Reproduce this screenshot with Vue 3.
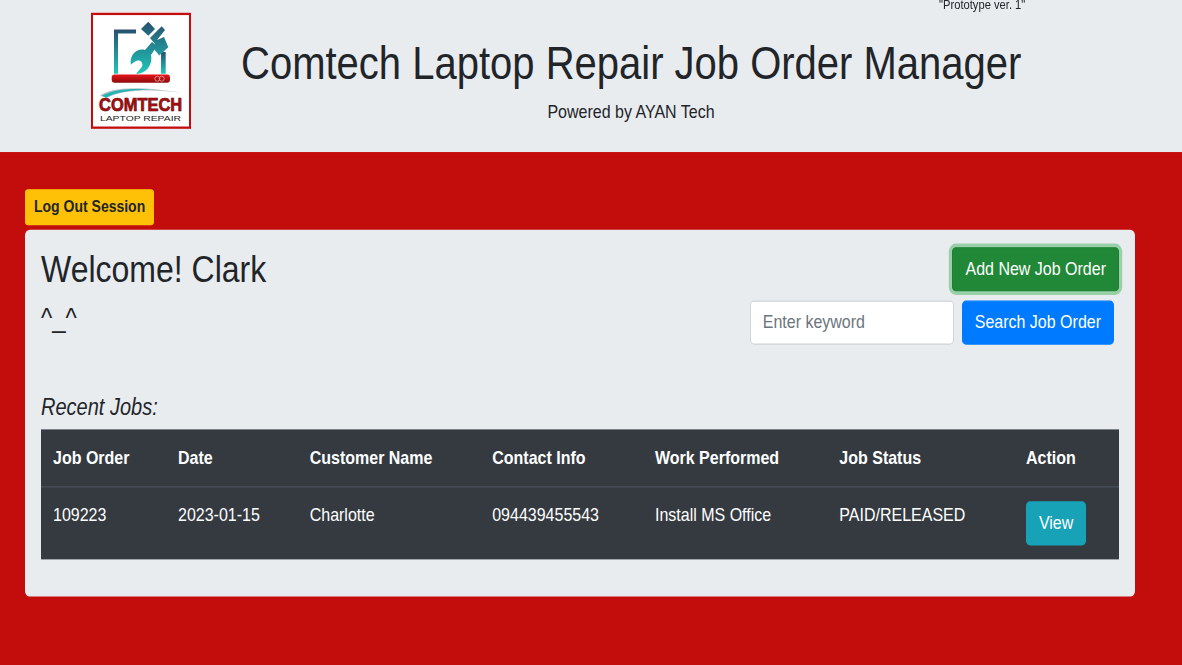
<script setup>
const columns = ['Job Order', 'Date', 'Customer Name', 'Contact Info', 'Work Performed', 'Job Status', 'Action']
const jobs = [
  { id: '109223', date: '2023-01-15', customer: 'Charlotte', contact: '094439455543', work: 'Install MS Office', status: 'PAID/RELEASED' },
]
</script>

<template>
  <div class="page">
    <header class="banner">
      <div class="logo">
        <svg width="96" height="96" viewBox="0 0 96 112" preserveAspectRatio="none">
          <defs>
            <linearGradient id="teal" x1="0" y1="0" x2="0" y2="1">
              <stop offset="0" stop-color="#27506f" />
              <stop offset="1" stop-color="#1fc8ba" />
            </linearGradient>
            <linearGradient id="bar" x1="0" y1="0" x2="0" y2="1">
              <stop offset="0" stop-color="#e8141a" />
              <stop offset="1" stop-color="#8c0c0c" />
            </linearGradient>
            <linearGradient id="tool" gradientUnits="userSpaceOnUse" x1="0" y1="7" x2="0" y2="59">
              <stop offset="0" stop-color="#27506f" />
              <stop offset="1" stop-color="#1fc8ba" />
            </linearGradient>
          </defs>
          <path d="M21 59V14.5H43V18.5H25V59Z" fill="url(#teal)" />
          <path d="M68 37H72.7V59H68Z" fill="url(#teal)" />
          <path d="M48 14L55.3 6.7L62 14L55.3 20.7Z" fill="url(#tool)" />
          <path d="M57 23L68.7 11.3L72 15L64 25L71 22L75.3 32.3L66.3 40.7L60 33L62 29Z" fill="url(#tool)" />
          <path d="M38 50C36 41 43 33 52 35L59 27L64 31L58 40C60 50 53 59 43 59L49 52C50 49 49 47 47 46C44 45 41 47 38 50Z" fill="url(#tool)" />
          <rect x="18.7" y="59.7" width="58.3" height="8.3" rx="3" fill="url(#bar)" />
          <circle cx="64.3" cy="64" r="2.5" fill="none" stroke="#e8a0a0" stroke-width=".8" />
          <circle cx="68.7" cy="64" r="2.5" fill="none" stroke="#e8a0a0" stroke-width=".8" />
          <path d="M7 81C16 74 40 70 88 78C56 74 30 75 14 83Z" fill="#b9c4c8" />
          <path d="M9 81C18 76 34 73 58 75C36 75 22 78 13 83Z" fill="#25b5b5" />
          <text transform="translate(6 96) scale(1.03 1.15)" class="logo-name">COMTECH</text>
          <text x="7" y="106" class="logo-sub" textLength="81" lengthAdjust="spacingAndGlyphs">LAPTOP REPAIR</text>
        </svg>
      </div>
      <div class="title-block">
        <p class="version">"Prototype ver. 1"</p>
        <h1>Comtech Laptop Repair Job Order Manager</h1>
        <p class="powered">Powered by AYAN Tech</p>
      </div>
    </header>

    <main class="content">
      <button class="btn btn-warning">Log Out Session</button>
      <section class="card">
        <div class="top-row">
          <div class="welcome">
            <h2>Welcome! Clark</h2>
            <h4>^_^</h4>
          </div>
          <div class="actions">
            <button class="btn btn-success">Add New Job Order</button>
            <form class="search" @submit.prevent>
              <input type="text" placeholder="Enter keyword" />
              <button class="btn btn-primary">Search Job Order</button>
            </form>
          </div>
        </div>
        <h5 class="recent">Recent Jobs:</h5>
        <table>
          <thead>
            <tr>
              <th v-for="col in columns" :key="col">{{ col }}</th>
            </tr>
          </thead>
          <tbody>
            <tr v-for="job in jobs" :key="job.id">
              <td>{{ job.id }}</td>
              <td>{{ job.date }}</td>
              <td>{{ job.customer }}</td>
              <td>{{ job.contact }}</td>
              <td>{{ job.work }}</td>
              <td>{{ job.status }}</td>
              <td><button class="btn btn-info">View</button></td>
            </tr>
          </tbody>
        </table>
      </section>
    </main>
  </div>
</template>

<style>
html, body { margin: 0; background: #c30d0d; min-height: 665px; }
</style>

<style scoped>
/* the reference is a 573px tall page stretched to 665px */
.page {
  width: 1182px;
  height: 573px;
  transform: scaleY(1.16056);
  transform-origin: 0 0;
  background: #c30d0d;
  font-family: "Liberation Sans", Arial, sans-serif;
  font-size: 16px;
  line-height: 1.5;
  color: #212529;
}
.banner {
  height: 131px;
  background: #e9ecef;
  display: flex;
}
.logo {
  margin: 11px 0 0 91px;
  width: 100px;
  height: 100px;
  box-sizing: border-box;
  border: 2px solid #c30d0d;
  background: #fff;
}
.logo svg { display: block; }
.logo-name {
  font-family: "Liberation Sans", sans-serif;
  font-size: 16px;
  font-weight: 700;
  fill: #b50d10;
  stroke: #5e0808;
  stroke-width: .6px;
}
.logo-sub {
  font-family: "Liberation Sans", sans-serif;
  font-size: 7px;
  fill: #222;
}
.title-block {
  position: relative;
  flex: none;
  width: 780px;
  margin-left: 50px;
  text-align: center;
}
.version {
  position: absolute;
  top: -4px;
  left: 698px;
  margin: 0;
  font-size: 11.2px;
  white-space: nowrap;
}
h1 {
  margin: 0 0 7.25px;
  padding-top: 30px;
  font-size: 40px;
  font-weight: 500;
  line-height: 1.2;
  white-space: nowrap;
}
.powered { margin: 0; }
.content { padding: 32px 47px 0 25px; }
.btn {
  font-family: inherit;
  font-size: 16px;
  line-height: 1.5;
  border: 1px solid transparent;
  border-radius: 4px;
  padding: 6px 12px;
  white-space: nowrap;
}
.btn-warning {
  display: block;
  background: #ffc107;
  border-color: #ffc107;
  color: #212529;
  font-size: 14px;
  font-weight: 700;
  padding: 4px 8px;
  border-radius: 3.2px;
  margin-bottom: 4px;
}
.card {
  background: #e9ecef;
  border-radius: 4.8px;
  padding: 15px 16px 32.2px;
}
.top-row {
  display: flex;
  justify-content: space-between;
  height: 125.8px;
}
h2 {
  margin: 0 0 8.3px;
  font-size: 32px;
  font-weight: 500;
  line-height: 1.2;
}
h4 {
  margin: 0;
  font-size: 24px;
  font-weight: 500;
  line-height: 1.2;
}
.actions {
  display: flex;
  flex-direction: column;
  align-items: flex-end;
  gap: 8.3px;
}
.btn-success {
  background: #218838;
  border-color: #1e7e34;
  color: #fff;
  box-shadow: 0 0 0 3.2px rgba(72, 180, 97, .5);
}
.search {
  display: flex;
  gap: 8px;
  margin-right: 5px;
}
.search input {
  width: 204px;
  height: 38px;
  box-sizing: border-box;
  padding: 6px 12px;
  border: 1px solid #ced4da;
  border-radius: 4px;
  background: #fff;
  font-family: inherit;
  font-size: 16px;
  color: #495057;
}
.search input::placeholder { color: #6c757d; }
.btn-primary {
  background: #007bff;
  border-color: #007bff;
  color: #fff;
}
.recent {
  margin: 0 0 7.4px;
  font-size: 20px;
  font-style: italic;
  font-weight: 500;
  line-height: 1.2;
}
table {
  width: 100%;
  border-collapse: collapse;
  background: #343a40;
  color: #fff;
}
th, td {
  padding: 12px;
  text-align: left;
  vertical-align: top;
  white-space: nowrap;
}
th {
  padding-top: 12.6px;
  border-bottom: 1px solid #454d55;
}
.btn-info {
  background: #17a2b8;
  border-color: #17a2b8;
  color: #fff;
}
</style>
